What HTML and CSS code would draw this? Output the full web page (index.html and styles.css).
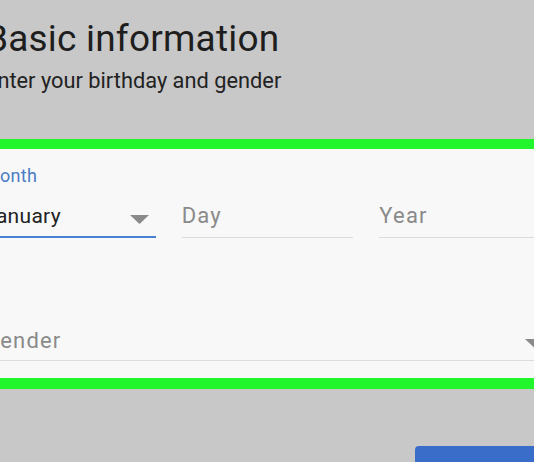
FILE: index.html
```html
<!DOCTYPE html>
<html lang="en">
<head>
<meta charset="utf-8">
<title>Basic information</title>
<link rel="stylesheet" href="styles.css">
</head>
<body>
<header class="header">
  <h1 class="title">Basic information</h1>
  <p class="subtitle">Enter your birthday and gender</p>
</header>
<section class="panel">
  <div class="form">
    <div class="label">Month</div>
    <div class="row">
      <div class="field field-active">
        <span class="value">January</span>
        <svg class="arrow" width="19" height="9" viewBox="0 0 19 9"><path d="M0 0H19L9.5 9Z" fill="#8a8a8a"/></svg>
      </div>
      <div class="field"><span class="placeholder">Day</span></div>
      <div class="field"><span class="placeholder">Year</span></div>
    </div>
    <div class="field field-gender">
      <span class="placeholder">Gender</span>
      <svg class="arrow" width="19" height="9" viewBox="0 0 19 9"><path d="M0 0H19L9.5 9Z" fill="#8a8a8a"/></svg>
    </div>
  </div>
</section>
<footer class="footer">
  <button class="next">Next</button>
</footer>
</body>
</html>
```
FILE: styles.css
```css
html, body {
  margin: 0;
  padding: 0;
}
body {
  width: 534px;
  height: 462px;
  overflow: hidden;
  background: #c8c8c8;
  font-family: Roboto, "Liberation Sans", sans-serif;
  color: #222;
}
.header {
  margin-left: -15px;
  padding-top: 17px;
}
.title {
  margin: 0;
  font-size: 37px;
  font-weight: 400;
  letter-spacing: 0.2px;
  line-height: 43px;
  color: #1e1e1e;
}
.subtitle {
  margin: 8px 0 45px;
  font-size: 21.8px;
  line-height: 26px;
  color: #222;
}
.panel {
  background: #f8f8f8;
  border-top: 10px solid #21f52b;
  border-bottom: 11px solid #21f52b;
  overflow: hidden;
  padding: 17px 0 17px;
}
.form {
  margin-left: -16px;
  width: 567px;
}
.label {
  font-size: 18px;
  letter-spacing: 0.3px;
  line-height: 20px;
  color: #4b7cc6;
  margin-bottom: 16px;
}
.row {
  display: flex;
  gap: 26px;
}
.row .field {
  flex: 1;
}
.field {
  display: flex;
  align-items: flex-start;
  justify-content: space-between;
  font-size: 21px;
  line-height: 28px;
  padding-bottom: 7px;
  border-bottom: 1px solid #dcdcdc;
}
.field-active {
  padding-bottom: 6px;
  border-bottom: 2px solid #4a80d2;
}
.value {
  color: #222;
  letter-spacing: 0.3px;
}
.placeholder {
  color: #8a8a8a;
  font-size: 22px;
  letter-spacing: 1.2px;
}
.arrow {
  margin-top: 13px;
  margin-right: 7px;
}
.field-gender {
  margin-top: 89px;
  padding-bottom: 5px;
}
.field-gender .arrow {
  margin-top: 12px;
}
.footer {
  display: flex;
  justify-content: flex-end;
  margin-top: 57px;
}
.next {
  width: 140px;
  height: 50px;
  margin-right: -21px;
  border: 0;
  border-radius: 4px;
  background: #3a6cc9;
  color: #fff;
  font-family: Roboto, "Liberation Sans", sans-serif;
  font-size: 18px;
}
```
